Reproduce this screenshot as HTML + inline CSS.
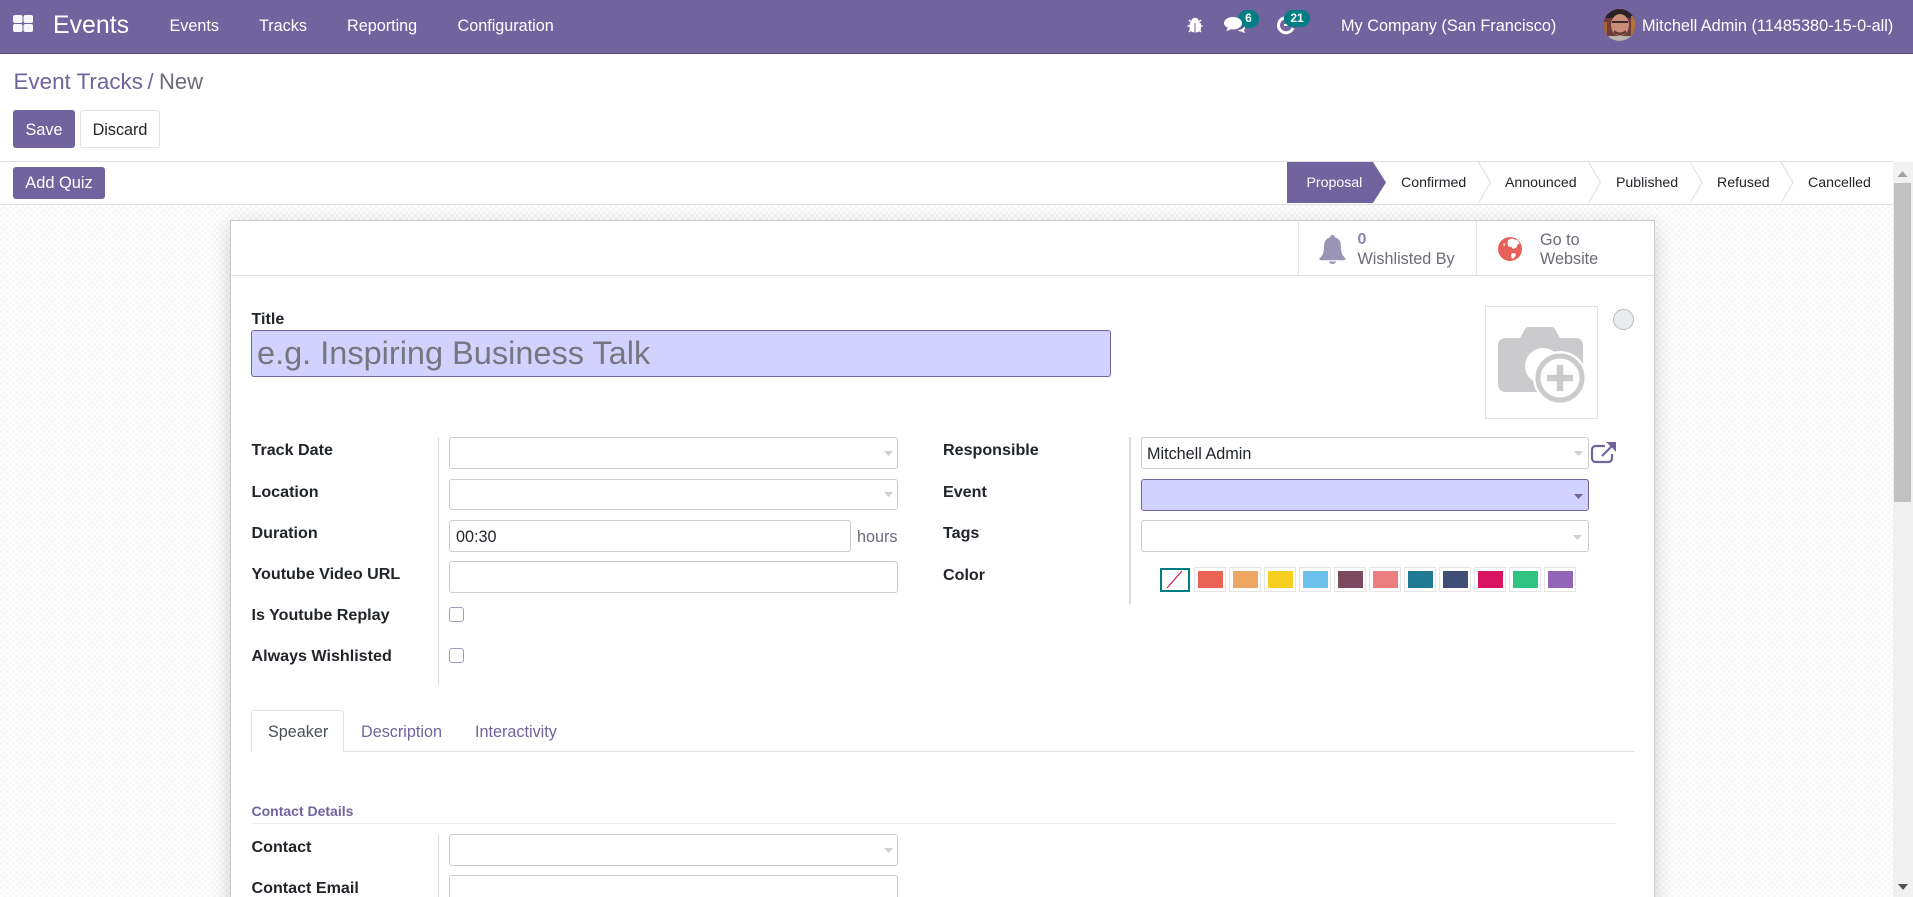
<!DOCTYPE html>
<html lang="en">
<head>
<meta charset="utf-8">
<title>Event Tracks / New</title>
<style>
html,body{margin:0;padding:0;width:1913px;height:897px;overflow:hidden;background:#fff;}
body{position:relative;font-family:"Liberation Sans",Arial,sans-serif;font-size:16.2px;color:#212529;}
.a{position:absolute;box-sizing:border-box;}
.t{position:absolute;white-space:nowrap;line-height:20px;}
.nav{color:#fff;margin-top:1px;}
.lb{font-weight:bold;font-size:16.1px;color:#212529;left:251.5px;margin-top:1px;}
.f{position:absolute;box-sizing:border-box;background:#fff;border:1px solid #ccc;border-radius:3px;}
.req{background:#d2d2ff;border-color:#71639e;}
.btn{position:absolute;box-sizing:border-box;border-radius:3px;text-align:center;background:#71639e;color:#fff;}
.st{font-size:14.15px;color:#212529;}
.sw{position:absolute;box-sizing:border-box;width:32px;height:25px;top:567px;border:1px solid #e4e4e4;padding:3px 2.5px;}
.sw i{display:block;width:100%;height:100%;}
.cb{position:absolute;box-sizing:border-box;left:449px;width:15px;height:15px;border:1px solid #a09cbc;border-radius:3px;background:#fff;}
</style>
</head>
<body>
<!-- content background -->
<div class="a" style="left:0;top:205px;width:1893px;height:692px;background-color:#fff;background-image:conic-gradient(#f7f7f7 25%,#fff 0 50%,#f7f7f7 0 75%,#fff 0);background-size:6px 6px;"></div>

<!-- navbar -->
<div class="a" style="left:0;top:0;width:1913px;height:54px;background:#71639e;border-bottom:1px solid #5b4f80;"></div>
<div class="t nav" style="left:53px;top:14px;font-size:24.9px;">Events</div>
<div class="t nav" style="left:169.5px;top:14.5px;">Events</div>
<div class="t nav" style="left:259px;top:14.5px;">Tracks</div>
<div class="t nav" style="left:347px;top:14.5px;">Reporting</div>
<div class="t nav" style="left:457.5px;top:14.5px;">Configuration</div>
<div class="t nav" style="left:1341px;top:14.5px;font-size:16.3px;">My Company (San Francisco)</div>
<div class="t nav" style="left:1642px;top:14.5px;font-size:16.3px;">Mitchell Admin (11485380-15-0-all)</div>
<div class="a" style="left:1238px;top:10px;width:21px;height:18px;border-radius:9px;background:#017e84;color:#fff;font-size:12px;font-weight:bold;line-height:17px;text-align:center;">6</div>
<div class="a" style="left:1284px;top:10px;width:26px;height:17px;border-radius:9px;background:#017e84;color:#fff;font-size:12px;font-weight:bold;line-height:16px;text-align:center;z-index:3;">21</div>

<!-- control panel -->
<div class="t" style="left:13.5px;top:72px;font-size:22.4px;color:#71639e;">Event Tracks</div>
<div class="t" style="left:147.500px;top:72px;font-size:22px;color:#71639e;">/</div>
<div class="t" style="left:159px;top:72px;font-size:22px;color:#6c6b78;">New</div>
<div class="btn" style="left:13px;top:110px;width:62px;height:38px;line-height:40px;">Save</div>
<div class="btn" style="left:80px;top:110px;width:80px;height:38px;line-height:39px;background:#fff;color:#212529;border:1px solid #dee2e6;">Discard</div>
<div class="a" style="left:0;top:161px;width:1893px;height:44px;background:#fff;border-top:1px solid #dedee4;border-bottom:1px solid #dedee4;"></div>
<div class="btn" style="left:13px;top:167px;width:92px;height:32px;line-height:32px;font-size:16.4px;">Add Quiz</div>

<!-- status bar text -->
<div class="t st" style="left:1306.500px;top:172px;color:#fff;z-index:3;">Proposal</div>
<div class="t st" style="left:1401px;top:172px;">Confirmed</div>
<div class="t st" style="left:1505px;top:172px;">Announced</div>
<div class="t st" style="left:1616px;top:172px;">Published</div>
<div class="t st" style="left:1717px;top:172px;">Refused</div>
<div class="t st" style="left:1808px;top:172px;">Cancelled</div>

<!-- scrollbar -->
<div class="a" style="left:1893px;top:162px;width:20px;height:735px;background:#f1f1f1;"></div>
<div class="a" style="left:1894px;top:183px;width:17px;height:319px;background:#c1c1c1;"></div>

<!-- sheet -->
<div class="a" style="left:230px;top:220px;width:1425px;height:700px;background:#fff;border:1px solid #ccc;box-shadow:0 5px 20px -1px rgba(0,0,0,.2);"></div>
<div class="a" style="left:231px;top:275px;width:1423px;height:1px;background:#dedee4;"></div>
<div class="a" style="left:1298px;top:221px;width:1px;height:54px;background:#e4e4e8;"></div>
<div class="a" style="left:1476px;top:221px;width:1px;height:54px;background:#e4e4e8;"></div>
<div class="t" style="left:1357.500px;top:230px;font-size:16px;font-weight:bold;color:#8f7fb8;">0</div>
<div class="t" style="left:1357.500px;top:249px;color:#6c6b78;">Wishlisted By</div>
<div class="t" style="left:1540px;top:230px;color:#6c6b78;">Go to</div>
<div class="t" style="left:1540px;top:249px;color:#6c6b78;">Website</div>

<!-- title -->
<div class="t lb" style="top:307.500px;">Title</div>
<div class="f req" style="left:251px;top:330px;width:860px;height:47px;"></div>
<div class="t" style="left:257px;top:333px;font-size:32.5px;line-height:40px;color:#77767f;">e.g. Inspiring Business Talk</div>
<div class="a" style="left:1485px;top:306px;width:113px;height:113px;border:1px solid #dee2e6;"></div>
<div class="a" style="left:1613px;top:309px;width:21px;height:21px;border-radius:50%;background:#e9ecef;border:1px solid #b9b9b9;"></div>

<!-- left group -->
<div class="t lb" style="top:439px;">Track Date</div>
<div class="t lb" style="top:481px;">Location</div>
<div class="t lb" style="top:522px;">Duration</div>
<div class="t lb" style="top:563px;">Youtube Video URL</div>
<div class="t lb" style="top:604px;">Is Youtube Replay</div>
<div class="t lb" style="top:645px;">Always Wishlisted</div>
<div class="a" style="left:438px;top:437px;width:1px;height:248px;background:#dcdcdc;"></div>
<div class="f" style="left:449px;top:437px;width:449px;height:32px;"></div>
<div class="f" style="left:449px;top:479px;width:449px;height:31px;"></div>
<div class="f" style="left:449px;top:520px;width:402px;height:32px;"></div>
<div class="t" style="left:456px;top:526.500px;color:#212529;">00:30</div>
<div class="t" style="left:857px;top:527px;color:#6c6b78;">hours</div>
<div class="f" style="left:449px;top:561px;width:449px;height:32px;"></div>
<div class="cb" style="top:607px;"></div>
<div class="cb" style="top:648px;"></div>

<!-- right group -->
<div class="t lb" style="left:943px;top:439px;">Responsible</div>
<div class="t lb" style="left:943px;top:481px;">Event</div>
<div class="t lb" style="left:943px;top:522px;">Tags</div>
<div class="t lb" style="left:943px;top:564px;">Color</div>
<div class="a" style="left:1129px;top:437px;width:2px;height:167px;background:#dcdcdc;"></div>
<div class="f" style="left:1141px;top:437px;width:448px;height:32px;"></div>
<div class="t" style="left:1147px;top:443.500px;color:#212529;">Mitchell Admin</div>
<div class="f req" style="left:1141px;top:479px;width:448px;height:32px;"></div>
<div class="f" style="left:1141px;top:520px;width:448px;height:32px;"></div>

<!-- colour swatches -->
<div class="a" style="left:1160px;top:568px;width:30px;height:24px;border:2px solid #017e84;background:#fff;"></div>
<div class="sw" style="left:1194px;"><i style="background:#ea6355"></i></div>
<div class="sw" style="left:1229px;"><i style="background:#eea763"></i></div>
<div class="sw" style="left:1264px;"><i style="background:#f7cd1f"></i></div>
<div class="sw" style="left:1299px;"><i style="background:#6cc1ed"></i></div>
<div class="sw" style="left:1334px;"><i style="background:#7c4a5e"></i></div>
<div class="sw" style="left:1369px;"><i style="background:#eb7e7f"></i></div>
<div class="sw" style="left:1404px;"><i style="background:#217a94"></i></div>
<div class="sw" style="left:1439px;"><i style="background:#414f76"></i></div>
<div class="sw" style="left:1474px;"><i style="background:#d6145f"></i></div>
<div class="sw" style="left:1509px;"><i style="background:#30c381"></i></div>
<div class="sw" style="left:1544px;"><i style="background:#9365b8"></i></div>

<!-- tabs -->
<div class="a" style="left:251px;top:751px;width:1384px;height:1px;background:#dee2e6;"></div>
<div class="a" style="left:251px;top:710px;width:93px;height:42px;background:#fff;border:1px solid #dee2e6;border-bottom:none;border-radius:3px 3px 0 0;"></div>
<div class="t" style="left:268px;top:722px;color:#495057;">Speaker</div>
<div class="t" style="left:361px;top:722px;color:#71639e;">Description</div>
<div class="t" style="left:475px;top:722px;color:#71639e;">Interactivity</div>

<!-- contact details -->
<div class="t" style="left:251.500px;top:801px;font-size:14px;font-weight:bold;color:#71639e;">Contact Details</div>
<div class="a" style="left:252px;top:823px;width:1364px;height:1px;background:#f0f0f0;"></div>
<div class="t lb" style="top:835.500px;">Contact</div>
<div class="t lb" style="top:877px;">Contact Email</div>
<div class="a" style="left:438px;top:834px;width:1px;height:63px;background:#dcdcdc;"></div>
<div class="f" style="left:449px;top:834px;width:449px;height:32px;"></div>
<div class="f" style="left:449px;top:875px;width:449px;height:40px;"></div>

<!-- icon layer -->
<svg class="a" style="left:0;top:0;z-index:2;pointer-events:none;" width="1913" height="897" viewBox="0 0 1913 897" xmlns="http://www.w3.org/2000/svg">
  <!-- apps -->
  <g fill="#fff" opacity=".95">
    <rect x="13" y="15" width="9.5" height="8" rx="2"/><rect x="23.5" y="15" width="9.5" height="8" rx="2"/>
    <rect x="13" y="24" width="9.5" height="8" rx="2"/><rect x="23.5" y="24" width="9.5" height="8" rx="2"/>
  </g>
  <!-- bug -->
  <g fill="#fff">
    <ellipse cx="1195" cy="21" rx="3.6" ry="3.2"/>
    <path d="M1190.5 23h9.5c.8 0 1 .5 1 1v4c0 2.6-2.2 4.4-5.2 4.4h-1c-3 0-5.2-1.8-5.2-4.4v-4c0-.5.2-1 .9-1z"/>
    <path d="M1189 20l3 3M1201 20l-3 3M1187.5 26h3M1202.500 26h-3M1189 32l2.500-3M1201 32l-2.500-3" stroke="#fff" stroke-width="1.500" fill="none"/>
  </g>
  <rect x="1194.500" y="23" width="1" height="10" fill="#71639e"/>
  <!-- comments -->
  <g fill="#fff">
    <path d="M1233 17c5 0 9 2.700 9 6.200s-4 6.200-9 6.200c-.8 0-1.500-.1-2.200-.2-1.500 1-3.200 1.500-5 1.700 1-1 1.700-2.100 2-3.200-2.200-1.100-3.800-2.700-3.800-4.500 0-3.500 4-6.200 9-6.200z"/>
    <path d="M1238 30.400c3-.4 5.300-2 6.400-4 1 .7.600 2.800-.4 3.900.2 1 .8 1.800 1.400 2.600-1.700-.2-3-.7-4.200-1.500-1.300.1-2.700-.3-3.600-1z"/>
  </g>
  <!-- activity clock -->
  <path d="M1284 18a7.500 7.500 0 1 0 9 10" fill="none" stroke="#fff" stroke-width="3"/>
  <path d="M1284 25h4" stroke="#fff" stroke-width="2"/>
  <!-- avatar -->
  <defs><clipPath id="av"><circle cx="1619.500" cy="25" r="16"/></clipPath></defs>
  <g clip-path="url(#av)">
    <rect x="1603" y="9" width="33" height="32" fill="#6e3d3a"/>
    <rect x="1603" y="9" width="33" height="9" fill="#2a2224"/>
    <ellipse cx="1620" cy="25" rx="9" ry="11" fill="#c98d78"/>
    <rect x="1612" y="21" width="16" height="2" fill="#3a2c2e"/>
    <path d="M1614 30q6 5 12 0v3q-6 4-12 0z" fill="#5b3a34"/>
    <rect x="1606" y="36" width="28" height="6" fill="#b8b4ae"/>
    <rect x="1603" y="22" width="4" height="18" fill="#a8653a"/>
    <rect x="1631" y="16" width="5" height="20" fill="#b07038"/>
  </g>
  <!-- status bar -->
  <path d="M1287 162h86l13 20.500-13 20.500h-86z" fill="#71639e"/>
  <g fill="none" stroke="#dedee4" stroke-width="1">
    <path d="M1478.500 162l12 20.500-12 20.500"/>
    <path d="M1588.500 162l12 20.500-12 20.500"/>
    <path d="M1690 162l12 20.500-12 20.500"/>
    <path d="M1781 162l12 20.500-12 20.500"/>
  </g>
  <!-- scroll arrows -->
  <path d="M1897.500 177l5-6 5 6z" fill="#a3a3a3"/>
  <path d="M1898 884h10l-5 6z" fill="#50505a"/>
  <!-- bell -->
  <path d="M1332.500 235c1.400 0 2.400 1 2.400 2.300 3.800 1 6 4.200 6 8.500 0 6 1 9.500 4.700 12.500 0 1.300-.7 2-2 2h-22.200c-1.300 0-2-.7-2-2 3.700-3 4.700-6.500 4.700-12.500 0-4.300 2.200-7.500 6-8.500 0-1.300 1-2.300 2.400-2.300z" fill="#9a95b6"/>
  <path d="M1329 261.500h7a3.500 2.500 0 0 1-7 0z" fill="#9a95b6"/>
  <!-- globe -->
  <circle cx="1510" cy="249" r="12" fill="#e8605a"/>
  <path d="M1508 240l4-1.500 6 2 1.500 3-2 1-1 3-3.500 1.500-1.500-2-3-.5-1-3zM1512 253l3.500 .5 .5 2-3 3.500-1.500-1-.5-3zM1503 244l1.500-1 .5 2-1 1z" fill="#fff"/>
  <!-- camera -->
  <path d="M1506 338h14l4-7c.8-1.400 2-4 4-4h24c2 0 3.200 2.600 4 4l4 7h15c6 0 8 3 8 8v38c0 5-2 8-8 8h-69c-5 0-8-3-8-8v-38c0-5 3-8 8-8z" fill="#cbcbcd"/>
  <circle cx="1543" cy="366" r="18" fill="#fff"/>
  <circle cx="1560" cy="378" r="27" fill="#fff"/>
  <circle cx="1560" cy="378" r="22" fill="#fff" stroke="#cbcbcd" stroke-width="5"/>
  <path d="M1560 365v26M1547 378h26" stroke="#cbcbcd" stroke-width="6.500" fill="none"/>
  <!-- field carets -->
  <g fill="#cfcfcf">
    <path d="M884 451h9l-4.500 5z"/><path d="M884 492h9l-4.500 5z"/><path d="M884 848h9l-4.500 5z"/>
    <path d="M1574 451h9l-4.500 5z"/><path d="M1573 535h9l-4.500 5z"/>
  </g>
  <path d="M1574 494h9l-4.500 5z" fill="#71639e"/>
  <!-- open link -->
  <g fill="none" stroke="#71639e" stroke-width="2.200">
    <path d="M1605 446h-9c-2.500 0-4 1.500-4 4v8c0 2.500 1.500 4 4 4h12c2.500 0 4-1.500 4-4v-4"/>
    <path d="M1602 456l11-11"/>
  </g>
  <path d="M1606 442h10v10l-3.200-3.600-3.300-3z" fill="#71639e"/>
  <!-- no-colour slash -->
  <path d="M1167 588l15-17" stroke="#d6145f" stroke-width="1.200"/>
</svg>
</body>
</html>
